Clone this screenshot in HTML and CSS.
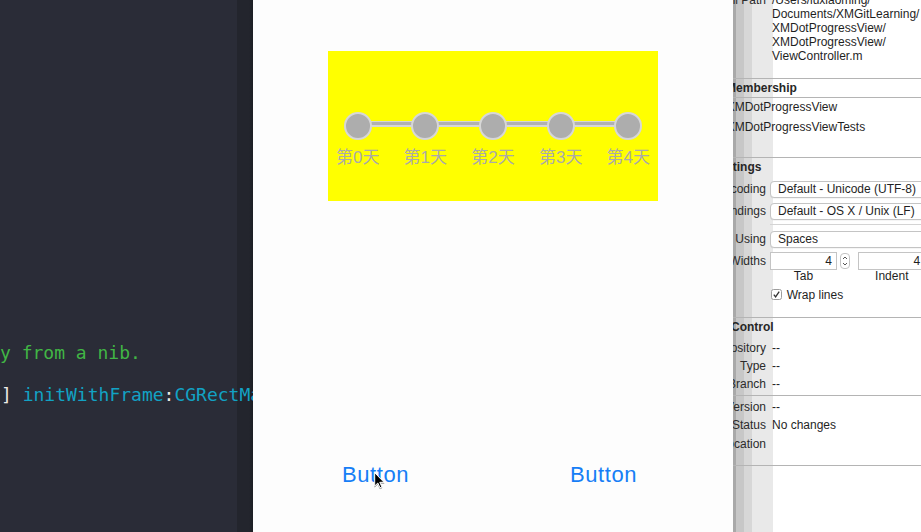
FILE: index.html
```html
<!DOCTYPE html>
<html>
<head>
<meta charset="utf-8">
<link rel="stylesheet" href="styles.css">
</head>
<body>
<div class="screen">
  <div class="editor">
    <div class="code">
      <div class="line"><span class="comment">y from a nib.</span></div>
      <div class="line"></div>
      <div class="line line-shift"><span class="punc">]</span> <span class="msg">initWithFrame</span><span class="punc">:</span><span class="msg">CGRectMake</span><span class="punc">(0, 0, 100, 100)];</span></div>
    </div>
  </div>

  <div class="sim">
    <div class="yellow">
      <div class="progress">
        <div class="track"></div>
        <div class="step"><span class="dot"></span><span class="lbl">第0天</span></div>
        <div class="step"><span class="dot"></span><span class="lbl">第1天</span></div>
        <div class="step"><span class="dot"></span><span class="lbl">第2天</span></div>
        <div class="step"><span class="dot"></span><span class="lbl">第3天</span></div>
        <div class="step"><span class="dot"></span><span class="lbl">第4天</span></div>
      </div>
    </div>
    <div class="buttons">
      <span class="btn">Button</span>
      <span class="btn">Button</span>
    </div>
    <svg class="cursor" width="11" height="17" viewBox="0 0 11 17">
      <path d="M0.7 0.7 L0.7 14 L3.8 11 L6 15.8 L7.9 15 L5.8 10.3 L10 10.3 Z" fill="#000" stroke="#fff" stroke-width="1" stroke-linejoin="round"/>
    </svg>
  </div>

  <div class="inspector">
    <div class="insp-inner">
      <div class="row path">
        <div class="label">Full Path</div>
        <div class="value">/Users/luxiaoming/<br>Documents/XMGitLearning/<br>XMDotProgressView/<br>XMDotProgressView/<br>ViewController.m</div>
      </div>
      <div class="sep sep-path"></div>
      <div class="hdr">Target Membership</div>
      <div class="sep"></div>
      <div class="members">
        <div class="member">XMDotProgressView</div>
        <div class="member">XMDotProgressViewTests</div>
      </div>
      <div class="sep sep-members"></div>
      <div class="hdr">Text Settings</div>
      <div class="row ctl first-ctl">
        <div class="label">Text Encoding</div>
        <div class="popup">Default - Unicode (UTF-8)</div>
      </div>
      <div class="row ctl">
        <div class="label">Line Endings</div>
        <div class="popup">Default - OS X / Unix (LF)</div>
      </div>
      <div class="row subsep-row">
        <div></div>
        <div class="subsep"></div>
      </div>
      <div class="row ctl indent-row">
        <div class="label">Indent Using</div>
        <div class="popup">Spaces</div>
      </div>
      <div class="row widths">
        <div class="label">Widths</div>
        <div class="fields">
          <div class="field">4</div>
          <div class="stepper">
            <svg width="8" height="14" viewBox="0 0 8 14"><path d="M2 5 L4 3 L6 5 M2 9 L4 11 L6 9" fill="none" stroke="#555" stroke-width="1"/></svg>
          </div>
          <div class="field field-indent">4</div>
        </div>
      </div>
      <div class="row captions">
        <div></div>
        <div class="caps">
          <span class="cap">Tab</span>
          <span class="cap cap-indent">Indent</span>
        </div>
      </div>
      <div class="row wrap">
        <div></div>
        <div class="check-line">
          <span class="checkbox">
            <svg width="9" height="9" viewBox="0 0 9 9"><path d="M1.8 4.6 L3.6 6.8 L7.2 1.6" fill="none" stroke="#333" stroke-width="1.3"/></svg>
          </span>
          <span>Wrap lines</span>
        </div>
      </div>
      <div class="sep sep-wrap"></div>
      <div class="hdr">Source Control</div>
      <div class="sc sc-first">
        <div class="row info"><div class="label">Repository</div><div class="value">--</div></div>
        <div class="row info"><div class="label">Type</div><div class="value">--</div></div>
        <div class="row info"><div class="label">Branch</div><div class="value">--</div></div>
      </div>
      <div class="sep sep-branch"></div>
      <div class="sc sc-second">
        <div class="row info2"><div class="label">Version</div><div class="value">--</div></div>
        <div class="row info2"><div class="label">Status</div><div class="value">No changes</div></div>
        <div class="row info2"><div class="label">Location</div><div class="value"></div></div>
      </div>
      <div class="sep sep-last"></div>
    </div>
  </div>
</div>
</body>
</html>
```

FILE: styles.css
```css
html, body {
  margin: 0;
  padding: 0;
}

.screen {
  display: flex;
  width: 921px;
  height: 532px;
  overflow: hidden;
}

/* ---------- code editor ---------- */
.editor {
  width: 253px;
  flex: none;
  height: 532px;
  overflow: hidden;
  background: linear-gradient(to right, #2a2c37 0, #2a2c37 237px, #23252d 237px, #23252d 249px, #1c1e24 253px);
}

.code {
  padding-top: 342px;
  font-family: "DejaVu Sans Mono", "Liberation Mono", monospace;
  font-size: 18px;
  line-height: 21px;
  color: #e6e6e6;
}

.line {
  height: 21px;
  white-space: pre;
}

.line-shift {
  padding-left: 1px;
}

.comment {
  color: #41b645;
}

.msg {
  color: #12a2c4;
}

.punc {
  color: #ecebe6;
}

/* ---------- simulator ---------- */
.sim {
  position: relative;
  width: 480px;
  flex: none;
  height: 532px;
  background: #fdfdfd;
  overflow: hidden;
}

.yellow {
  margin-top: 51px;
  margin-left: 75px;
  width: 330px;
  height: 150px;
  background: #ffff00;
}

.progress {
  position: relative;
  display: flex;
  justify-content: space-between;
  padding: 60.5px 15.7px 0;
  font-family: "Liberation Sans", "Noto Sans CJK SC", sans-serif;
}

.track {
  position: absolute;
  left: 29.7px;
  right: 29.7px;
  top: 70.3px;
  height: 6px;
  background: linear-gradient(to bottom, #d6d6d6 0, #d6d6d6 1.4px, #b1b1b1 1.4px, #b1b1b1 4px, #d6d6d6 4px);
}

.step {
  position: relative;
  width: 28px;
  display: flex;
  flex-direction: column;
  align-items: center;
}

.dot {
  display: block;
  box-sizing: border-box;
  width: 28px;
  height: 28px;
  border-radius: 50%;
  border: 2.6px solid #d7d7d7;
  background: #adadad;
}

.lbl {
  margin-top: 8.5px;
  font-size: 17px;
  line-height: 20px;
  color: #aaaaaa;
  white-space: nowrap;
}

.buttons {
  display: flex;
  gap: 128px;
  margin-top: 260.8px;
  padding-left: 72.5px;
}

.btn {
  width: 100px;
  text-align: center;
  font-family: "Liberation Sans", sans-serif;
  font-size: 22px;
  line-height: 26px;
  letter-spacing: 0.6px;
  color: #167ef6;
}

.cursor {
  position: absolute;
  left: 121px;
  top: 472px;
  filter: drop-shadow(0.5px 1px 0.6px rgba(0,0,0,0.35));
}

/* ---------- inspector ---------- */
.inspector {
  width: 188px;
  flex: none;
  height: 532px;
  overflow: hidden;
  background: linear-gradient(to right,
    #a9a9a9 0, #a9a9a9 3.5px,
    #c7c7c7 3.5px, #c7c7c7 11px,
    #d7d7d7 11px, #d7d7d7 19.5px,
    #e9e9e9 19.5px, #e9e9e9 39.5px,
    #ffffff 39.5px);
  font-family: "Liberation Sans", Arial, sans-serif;
  font-size: 12px;
  color: #1f1f1f;
}

.insp-inner {
  margin-left: -100px;
  width: 288px;
}

.row {
  display: grid;
  grid-template-columns: 133px 1fr;
  column-gap: 4px;
}

.label {
  text-align: right;
  white-space: nowrap;
  color: #2b2b2b;
}

.value {
  padding-left: 2px;
  white-space: nowrap;
}

.path {
  margin-top: -7px;
  line-height: 14px;
}

.sep {
  height: 1px;
  background: #b4b4b4;
}

.sep-path { margin-top: 15px; }
.sep-members { margin-top: 20px; }
.sep-wrap { margin-top: 16px; }
.sep-branch { margin-top: 2.5px; }
.sep-last { margin-top: 12px; }

.hdr {
  padding-left: 54px;
  font-weight: bold;
  line-height: 18px;
  white-space: nowrap;
  color: #262626;
}

.members {
  margin-top: -1px;
  padding-left: 93.7px;
}

.member {
  line-height: 20px;
  white-space: nowrap;
}

.ctl {
  margin-top: 5px;
  line-height: 17px;
}

.popup {
  box-sizing: border-box;
  width: 180px;
  height: 17px;
  border: 1px solid #c4c4c4;
  border-radius: 4px;
  background: #fff;
  padding-left: 7px;
  line-height: 15px;
  white-space: nowrap;
  box-shadow: 0 0.5px 0.5px rgba(0,0,0,0.08);
}

.subsep-row {
  margin-top: 4px;
}

.subsep {
  height: 1px;
  background: #d4d4d4;
}

.indent-row {
  margin-top: 5.5px;
}

.widths {
  margin-top: 4px;
  line-height: 18px;
}

.fields {
  display: flex;
  align-items: center;
}

.field {
  box-sizing: border-box;
  width: 67px;
  height: 18px;
  border: 1px solid #c4c4c4;
  background: #fff;
  text-align: right;
  padding-right: 4px;
  line-height: 16px;
  flex: none;
}

.stepper {
  box-sizing: border-box;
  width: 10px;
  height: 16px;
  margin-left: 3px;
  border: 1px solid #c4c4c4;
  border-radius: 4px;
  background: #fff;
  display: flex;
  align-items: center;
  justify-content: center;
  flex: none;
}

.field-indent {
  margin-left: 8.3px;
}

.captions {
  line-height: 12px;
}

.caps {
  display: flex;
}

.cap {
  width: 67px;
  text-align: center;
  flex: none;
}

.cap-indent {
  margin-left: 21.3px;
}

.wrap {
  margin-top: 7px;
  line-height: 12px;
}

.check-line {
  display: flex;
  align-items: center;
  padding-left: 1px;
}

.checkbox {
  box-sizing: border-box;
  width: 11px;
  height: 11px;
  border: 1px solid #9d9d9d;
  border-radius: 2.5px;
  background: #fff;
  margin-right: 4.7px;
  display: flex;
  align-items: center;
  justify-content: center;
}

.sc-first {
  margin-top: 3px;
}

.info {
  line-height: 18px;
}

.sc-second {
  margin-top: 1.5px;
}

.info2 {
  line-height: 18.5px;
  height: 18.5px;
}
```
